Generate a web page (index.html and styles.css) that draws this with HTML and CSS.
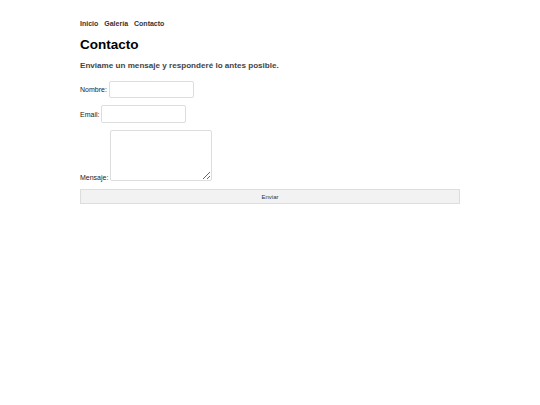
FILE: index.html
```html
<!DOCTYPE html>
<html lang="es">
<head>
<meta charset="utf-8">
<title>Contacto</title>
<link rel="stylesheet" href="styles.css">
</head>
<body>
<div class="page">
  <nav class="nav">
    <a href="#">Inicio</a>
    <a href="#">Galería</a>
    <a href="#">Contacto</a>
  </nav>
  <h1 class="title">Contacto</h1>
  <p class="lead">Enviame un mensaje y responderé lo antes posible.</p>
  <form class="form">
    <div class="row">
      <label for="n">Nombre:</label>
      <input id="n" class="field field-name" type="text">
    </div>
    <div class="row">
      <label for="e">Email:</label>
      <input id="e" class="field field-email" type="text">
    </div>
    <div class="row row-end">
      <label for="m">Mensaje:</label>
      <textarea id="m" class="field field-msg"></textarea>
    </div>
    <button type="button" class="send">Enviar</button>
  </form>
</div>
</body>
</html>
```
FILE: styles.css
```css
html, body {
  margin: 0;
  padding: 0;
  background: #fff;
}
body {
  font-family: "Liberation Sans", Arial, sans-serif;
  color: #000;
}
.page {
  width: 380px;
  margin: 0 auto;
  padding-top: 20px;
}
.nav {
  display: flex;
  gap: 6px;
  font-size: 7px;
  line-height: 8px;
  font-weight: bold;
}
.nav a {
  color: #333;
  text-decoration: none;
}
.title {
  margin: 9px 0 0;
  font-size: 13.5px;
  line-height: 16px;
  font-weight: bold;
}
.lead {
  margin: 8px 0 0;
  font-size: 8.1px;
  line-height: 10px;
  font-weight: bold;
  color: #444;
}
.form {
  margin-top: 10px;
  display: flex;
  flex-direction: column;
  gap: 7px;
}
.row {
  display: flex;
  align-items: center;
  gap: 2px;
  font-size: 7px;
  color: #222;
}
.row-end {
  align-items: flex-end;
}
.field {
  box-sizing: border-box;
  border: 1px solid #ddd;
  border-radius: 2px;
  background: #fff;
  margin: 0;
  padding: 2px;
  font-size: 7px;
  font-family: inherit;
}
.field-name {
  width: 85px;
  height: 17px;
}
.field-email {
  width: 85px;
  height: 18px;
}
.field-msg {
  width: 102px;
  height: 51px;
}
.send {
  margin-top: 1px;
  width: 380px;
  height: 15px;
  box-sizing: border-box;
  border: 1px solid #ddd;
  background: #f2f2f2;
  font-family: inherit;
  font-size: 6px;
  color: #333;
  padding: 0;
}
```
